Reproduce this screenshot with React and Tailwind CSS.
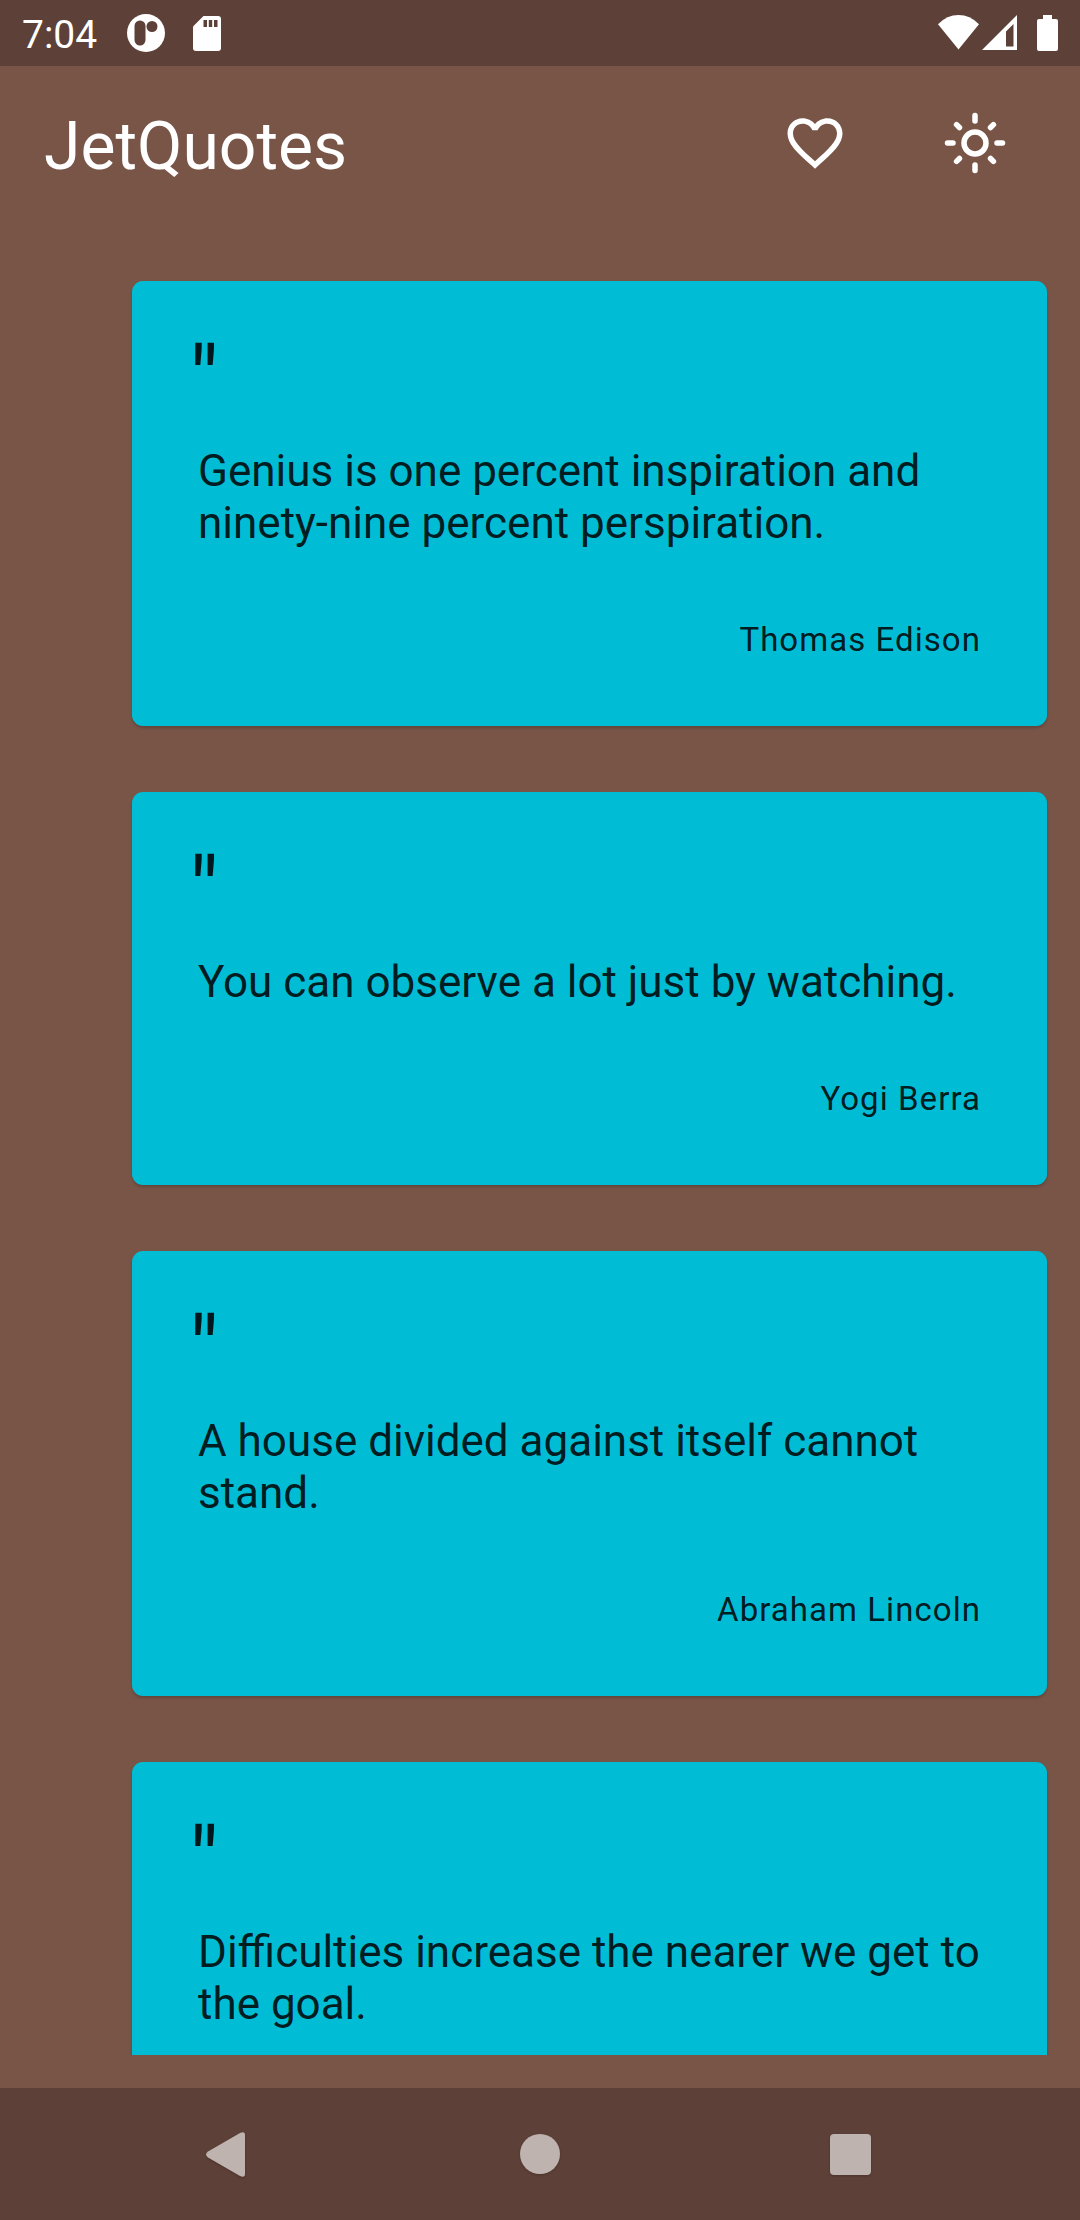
const quotes = [
  { text: "Genius is one percent inspiration and ninety-nine percent perspiration.", author: "Thomas Edison" },
  { text: "You can observe a lot just by watching.", author: "Yogi Berra" },
  { text: "A house divided against itself cannot stand.", author: "Abraham Lincoln" },
  { text: "Difficulties increase the nearer we get to the goal." },
];

function StatusBar() {
  return (
    <header className="flex h-[66px] shrink-0 items-center justify-between bg-[#5d4037] text-white">
      <div className="flex items-center">
        <span className="ml-[22px] h-[66px] w-[76px] pt-[2px] text-[39px] leading-[66px]">7:04</span>
        <svg className="ml-[29px] size-[38px]" viewBox="0 0 38 38">
          <circle cx="19" cy="19" r="19" fill="#fff" />
          <rect x="7.5" y="6.5" width="11" height="25" rx="5.5" fill="#5d4037" />
          <circle cx="25" cy="12.5" r="5.5" fill="#5d4037" />
        </svg>
        <svg className="ml-[28px] h-[35px] w-[28px]" viewBox="0 0 28 35">
          <path d="M10.5 0H25a3 3 0 0 1 3 3v29a3 3 0 0 1-3 3H3a3 3 0 0 1-3-3V10.5Z" fill="#fff" />
          <path d="M10.5 4h3.5v7h-3.5zM15.8 4h3.4v7h-3.4zM21 4h3.5v7H21z" fill="#5d4037" />
        </svg>
      </div>
      <div className="mr-[22px] flex items-center">
        <svg className="h-[36px] w-[120px]" viewBox="938 15 120 36" fill="#fff">
          <path d="M938 24.2Q947 15 958.5 15T979 24.2L958.5 49.5Z" />
          <path fillRule="evenodd" d="M982 50 1017 15V50ZM1006 31.5V46.5H1013.5V24Z" />
          <path d="M1043 15h9v4h4a2 2 0 0 1 2 2v28a2 2 0 0 1-2 2h-17a2 2 0 0 1-2-2V21a2 2 0 0 1 2-2h4z" />
        </svg>
      </div>
    </header>
  );
}

function Toolbar() {
  return (
    <div className="flex h-[154px] shrink-0 items-center text-white">
      <h1 className="ml-[44px] grow pt-[8px] text-[66px] leading-[66px]">JetQuotes</h1>
      <svg className="mr-[94px] mb-[1px] size-[66px]" viewBox="0 0 24 24" fill="#fff">
        <path d="M16.5 3c-1.74 0-3.41.81-4.5 2.09C10.91 3.81 9.24 3 7.5 3 4.42 3 2 5.42 2 8.5c0 3.78 3.4 6.86 8.55 11.54L12 21.35l1.45-1.32C18.6 15.36 22 12.28 22 8.5 22 5.42 19.58 3 16.5 3zm-4.4 15.55l-.1.1-.1-.1C7.14 14.24 4 11.39 4 8.5 4 6.5 5.5 5 7.5 5c1.54 0 3.04.99 3.57 2.36h1.87C13.46 5.99 14.96 5 16.5 5c2 0 3.5 1.5 3.5 3.5 0 2.89-3.14 5.74-7.9 10.05z" />
      </svg>
      <svg className="mr-[72px] size-[66px]" viewBox="0 0 24 24" fill="none" stroke="#fff" strokeWidth="2" strokeLinecap="round">
        <circle cx="12" cy="12" r="4" />
        <path d="M12 2v2M12 20v2M2 12h2M20 12h2M5.3 5.3l1.05 1.05M17.65 17.65l1.05 1.05M5.3 18.7l1.05-1.05M17.65 6.35l1.05-1.05" />
      </svg>
    </div>
  );
}

function QuoteCard({ text, author }) {
  return (
    <article className="flex shrink-0 flex-col rounded-[11px] bg-[#00bcd4] px-[66px] pt-[66px] pb-[66px] text-black/87 shadow-[0_2px_3px_rgba(0,0,0,0.2)]">
      <span className="-ml-[9px] h-[66px] text-[93.5px] leading-[66px]" aria-hidden="true">"</span>
      <p className="mt-[32px] text-[44px] leading-[52px]">{text}</p>
      {author && (
        <p className="mt-[69px] -mb-[2px] self-end text-[33px] leading-[44px] tracking-[1.05px]">{author}</p>
      )}
    </article>
  );
}

function NavBar() {
  return (
    <nav className="flex h-[132px] shrink-0 items-center justify-center bg-[#5d4037]">
      <svg className="h-[60px] w-[700px] drop-shadow-[0_1px_1px_rgba(0,0,0,0.2)]" viewBox="190 2124 700 60" fill="#beb3af">
        <path d="M206 2154.5Q206 2153 208 2151.5L240 2133Q245 2131 245 2135V2174Q245 2178 240 2176L208 2157.5Q206 2156 206 2154.5Z" />
        <circle cx="540" cy="2154" r="20" />
        <rect x="830" y="2134" width="41" height="41" rx="4" />
      </svg>
    </nav>
  );
}

export default function App() {
  return (
    <div className="flex h-[2220px] w-[1080px] flex-col overflow-hidden bg-[#795548] font-[Roboto,sans-serif]">
      <StatusBar />
      <Toolbar />
      <main className="mb-[33px] flex min-h-0 grow flex-col gap-[66px] overflow-hidden pt-[61px] pr-[33px] pl-[132px]">
        {quotes.map((q) => (
          <QuoteCard key={q.text} text={q.text} author={q.author} />
        ))}
      </main>
      <NavBar />
    </div>
  );
}
